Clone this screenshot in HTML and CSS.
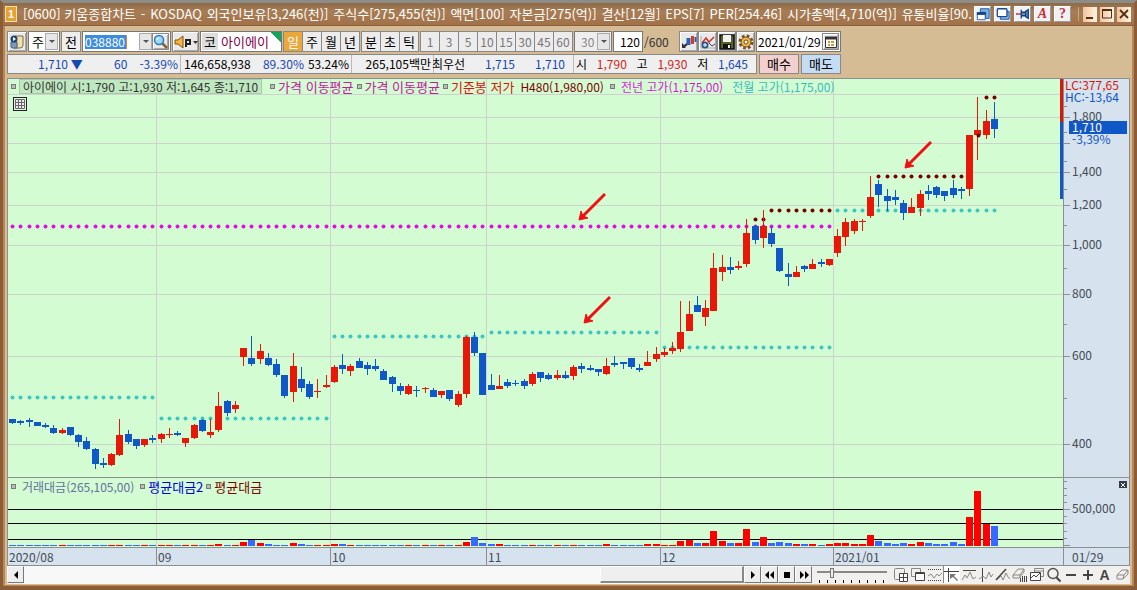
FILE: index.html
```html
<!DOCTYPE html>
<html lang="ko">
<head>
<meta charset="utf-8">
<title>키움종합차트</title>
<link rel="stylesheet" href="styles.css">
</head>
<body>
<div class="window">
  <header class="titlebar">
    <span class="badge">1</span>
    <h1 class="title"><span>[0600] 키움종합차트</span><span>-</span><span>KOSDAQ</span><span>외국인보유[3,246(천)]</span><span>주식수[275,455(천)]</span><span>액면[100]</span><span>자본금[275(억)]</span><span>결산[12월]</span><span>EPS[7]</span><span>PER[254.46]</span><span>시가총액[4,710(억)]</span><span>유통비율[90.</span></h1>
    <div class="tools">
      <button aria-label="화면 배치"><svg viewBox="0 0 16 16"><path d="M5 2h10v11h-4V6H5z" fill="#7db4e8" stroke="#174b94"/><path d="M1.500 6.500h9v8h-9z" fill="#fff" stroke="#2058a8"/><path d="M1 7.500h10" stroke="#103f85" stroke-width="3"/></svg></button>
      <button aria-label="화면 복사"><svg viewBox="0 0 16 16"><path d="M5 5h10v9H5z" fill="#8fb8e8" stroke="#174b94"/><rect x="1.500" y="2" width="11" height="9" rx="1" fill="#fff" stroke="#174b94" stroke-width="1.500"/></svg></button>
      <button aria-label="고정"><svg viewBox="0 0 16 16"><path d="M0 8h6" stroke="#d02020" stroke-width="1.500"/><path d="M6 3v10M6 6h5v4H6M11 5l3-2v10l-3-2z" fill="#5c94d0" stroke="#173f78" stroke-width="1.500"/></svg></button>
      <button class="glyph italic">A</button>
      <button class="glyph">?</button>
    </div>
    <i class="bar"></i>
    <div class="controls">
      <button aria-label="최소화"><svg viewBox="0 0 14 14"><path d="M3 11h7" stroke="#503010" stroke-width="2"/></svg></button>
      <button aria-label="최대화"><svg viewBox="0 0 14 14"><path d="M2.500 3v8h9V3z" fill="none" stroke="#503010"/><path d="M2 3h10" stroke="#503010" stroke-width="2"/></svg></button>
      <button aria-label="닫기"><svg viewBox="0 0 14 14"><path d="M3 3l8 8M11 3l-8 8" stroke="#503010" stroke-width="1.800"/></svg></button>
    </div>
  </header>

  <div class="toolbar">
    <button class="raised" aria-label="종목 이력"><svg viewBox="0 0 16 16"><path d="M6 2h8v9q0 3-3 3H5q3 0 3-3z" fill="#f4dfa8" stroke="#746b58"/><path d="M2 8h6v6H3q-1 0-1-2z" fill="#7b9cb8" stroke="#43617c"/><circle cx="5" cy="5" r="3.500" fill="#1c4774"/><path d="M4 3l3 2-3 2z" fill="#fff"/></svg></button>
    <span class="combo market"><select aria-label="시장"><option>주</option></select><i class="arrow"></i></span>
    <button class="flat">전</button>
    <span class="combo code"><input class="codeinput" aria-label="종목코드" value="038880"><i class="arrow"></i><button class="raised small" aria-label="검색"><svg viewBox="0 0 16 16"><path d="M9 9l5 5" stroke="#846040" stroke-width="2.500"/><circle cx="6" cy="6" r="4.500" fill="#9dd7ff" stroke="#3478b0" stroke-width="1.500"/><path d="M4 6q0-2 2-2" stroke="#fff" fill="none"/></svg></button></span>
    <button class="raised speaker" aria-label="소리"><svg viewBox="0 0 24 16"><path d="M1 6h3l5-4v12l-5-4H1z" fill="#f6b63c" stroke="#805010"/><path d="M12 13V6h4v4h-4" fill="none" stroke="#222" stroke-width="2"/><path d="M19 7h5l-2.500 3z" fill="#333"/></svg></button>
    <span class="name"><b>코</b><span>아이에이</span></span>
    <span class="tabs dark"><button class="on">일</button><button>주</button><button>월</button><button>년</button></span>
    <span class="tabs dark"><button>분</button><button>초</button><button>틱</button></span>
    <span class="tabs"><button>1</button><button>3</button><button>5</button><button>10</button><button>15</button><button>30</button><button>45</button><button>60</button></span>
    <span class="combo off"><select aria-label="간격"><option>30</option></select><i class="arrow"></i></span>
    <label class="count"><input value="120">/600</label>
    <span class="iconset">
      <button class="raised" aria-label="비교"><svg viewBox="0 0 16 16"><path d="M1 14V9l2 2 4-3 1 2-4 3 1 1z" fill="#333"/><path d="M7.500 4v7" stroke="#2464b8" stroke-width="4"/><path d="M11.500 2v8" stroke="#d83828" stroke-width="3"/><path d="M14.500 3v5" stroke="#2464b8" stroke-width="2"/></svg></button>
      <button class="raised" aria-label="지표"><svg viewBox="0 0 16 16"><path d="M1 2v12h14" stroke="#aaa" fill="none"/><path d="M2 9l4-5 3 4 5-5" fill="none" stroke="#d03030" stroke-width="1.500"/><path d="M9 9l3 3 3-2" stroke="#444" fill="none"/><circle cx="5" cy="11" r="3.500" fill="#285888"/><path d="M3 11h4M5 9v4" stroke="#fff"/></svg></button>
      <button class="raised" aria-label="저장"><svg viewBox="0 0 16 16"><path d="M1 1h14v14H1z" fill="#59612b" stroke="#111" stroke-width="1.500"/><path d="M4 1h8v7H4z" fill="#f2f2f2"/><path d="M4 10h8v5H4z" fill="#111"/><path d="M9 11h2v3H9z" fill="#eee"/></svg></button>
      <button class="raised" aria-label="설정"><svg viewBox="0 0 16 16"><circle cx="8" cy="8" r="6" fill="none" stroke="#765020" stroke-width="3" stroke-dasharray="2.600 2.100"/><circle cx="8" cy="8" r="5" fill="#f4b544" stroke="#765020"/><circle cx="8" cy="8" r="2" fill="#fff" stroke="#765020"/></svg></button>
    </span>
    <span class="combo date"><input aria-label="날짜" value="2021/01/29"><button class="raised small" aria-label="달력"><svg viewBox="0 0 16 16"><path d="M2.500 3.500h11v10h-11z" fill="#fff" stroke="#333"/><path d="M2 4h12" stroke="#333" stroke-width="3"/><path d="M5 8h2M8 8h3M5 11h2M8 11h3" stroke="#cf9838" stroke-width="2"/></svg></button></span>
  </div>

  <div class="quotebar">
    <div class="quote">
      <div class="cell c1"><span class="down">1,710 ▼</span><span class="down">60</span><span class="down">-3.39%</span></div>
      <div class="cell c2"><span>146,658,938</span><span class="down">89.30%</span><span>53.24%</span></div>
      <div class="cell c3"><span>265,105백만</span></div>
      <div class="cell c4"><span>최우선</span><span class="down">1,715</span><span class="down">1,710</span></div>
      <div class="cell c5"><span>시</span><span class="up">1,790</span><span>고</span><span class="up">1,930</span><span>저</span><span class="down">1,645</span></div>
    </div>
    <button class="trade buy">매수</button>
    <button class="trade sell">매도</button>
  </div>

  <main class="chart">
    <section class="plot">
      <svg id="price" viewBox="8 79 1055 398" preserveAspectRatio="none"></svg>
      <div class="legend">
        <i></i><span class="ohlc">아이에이 시:1,790 고:1,930 저:1,645 종:1,710</span>
        <i></i><span class="plum large">가격 이동평균</span>
        <i></i><span class="plum large">가격 이동평균</span>
        <i></i><span class="red large">기준봉 저가</span><span class="maroon wide">H480(1,980,00)</span>
        <i></i><span class="magenta wide">전년 고가(1,175,00)</span><span class="cyan wide">전월 고가(1,175,00)</span>
      </div>
      <button class="grid" aria-label="표"><svg viewBox="0 0 12 12"><path d="M1.500 1.500h9v9h-9zM1 4.500h10M1 7.500h10M4.500 2v9M7.500 2v9" fill="none" stroke="#666"/></svg></button>
    </section>
    <aside class="axis">
      <svg id="priceAxis" viewBox="1064 79 65 398" preserveAspectRatio="none"></svg>
    </aside>
    <section class="plot volume">
      <svg id="volume" viewBox="8 478 1055 69" preserveAspectRatio="none"></svg>
      <div class="legend low">
        <i></i><span class="slate wide">거래대금(265,105,00)</span>
        <i></i><span class="blue large">평균대금2</span>
        <i></i><span class="maroon large">평균대금</span>
      </div>
    </section>
    <aside class="axis volume">
      <svg id="volumeAxis" viewBox="1064 478 65 69" preserveAspectRatio="none"></svg>
      <button class="close" aria-label="닫기"><svg viewBox="0 0 8 8"><path d="M2 2l4 4M6 2l-4 4" stroke="#fff"/></svg></button>
    </aside>
    <div class="dates"><span>2020/08</span><span>09</span><span>10</span><span>11</span><span>12</span><span>2021/01</span></div>
    <div class="dates last">01/29</div>
  </main>

  <footer class="strip">
    <button class="key" aria-label="왼쪽"><svg viewBox="0 0 16 16"><path d="M10 4v8L6 8z"/></svg></button>
    <div class="track"><div class="thumb"></div></div>
    <button class="key" aria-label="오른쪽"><svg viewBox="0 0 16 16"><path d="M6 4v8l4-4z"/></svg></button>
    <button class="key" aria-label="뒤로"><svg viewBox="0 0 16 16"><path d="M7 4v8L3 8zM12 4v8L8 8z"/></svg></button>
    <button class="key" aria-label="정지"><svg viewBox="0 0 16 16"><path d="M5 5h6v6H5z"/></svg></button>
    <button class="key" aria-label="앞으로"><svg viewBox="0 0 16 16"><path d="M4 4v8l4-4zM9 4v8l4-4z"/></svg></button>
    <input class="speed" type="range" min="0" max="100" value="20" aria-label="속도">
    <div class="draw">
      <button aria-label="창 추가"><svg viewBox="0 0 16 16"><rect x="1.500" y="1.500" width="10" height="11" rx="1"/><path d="M6.500 6.500h8v8h-8zM6 10.500h9M10.500 6v9" fill="#fff" stroke="#444"/></svg></button>
      <button aria-label="창 겹치기"><svg viewBox="0 0 16 16"><path d="M1.500 1.500h9v8h-9z"/><path d="M5.500 5.500h9v8h-9zM5 6.500h10" fill="#fff" stroke="#444"/></svg></button>
      <button aria-label="자동선"><svg viewBox="0 0 16 16"><path d="M1 2.500h14M1 13.500h14" stroke="#444" stroke-dasharray="1 1"/><path d="M1 9l3-2 3 4 3-4 2 2 3-3"/></svg></button>
      <button class="on" aria-label="십자선"><svg viewBox="0 0 16 16"><path d="M4.500 1v14M0 4.500h15" stroke="#444"/><path d="M6 7h6l-2 2 4 4-1 1-4-4-3 2z" fill="#777" stroke="none"/></svg></button>
      <button aria-label="수평선"><svg viewBox="0 0 16 16"><path d="M2 3.500h13" stroke="#444"/><path d="M1 13l3-5 2 3 3-6 3 7 3-2"/></svg></button>
      <button aria-label="수직선"><svg viewBox="0 0 16 16"><path d="M4.500 1v14" stroke="#444"/><path d="M1 12l4-3 3 3 3-7 2 5 2-3"/></svg></button>
      <button aria-label="추세선"><svg viewBox="0 0 16 16"><path d="M1 13L11 2" stroke="#444" stroke-width="1.500"/><path d="M2 13l4-4 2 4 3-7 2 4 2 2"/></svg></button>
      <button aria-label="모두 지우기"><svg viewBox="0 0 16 16"><path d="M1 8l5-6h6L8 8zM1 8v3h6l5-6V2M8 8v3"/><path d="M8.500 11v4M10.500 9v6M12.500 9v6M14.500 9v6" stroke="#444"/></svg></button>
      <button aria-label="차트 복사"><svg viewBox="0 0 16 16"><path d="M5.500 1.500h9v8h-9zM6 4h8"/><path d="M1.500 5.500h10v8h-10zM2 11l3-3 2 2 4-4" fill="#fff" stroke="#444"/></svg></button>
      <button aria-label="돋보기"><svg viewBox="0 0 16 16"><circle cx="7" cy="6.500" r="5" stroke="#555" stroke-width="1.500"/><path d="M10.500 10.500l4 4" stroke="#444" stroke-width="2"/></svg></button>
      <button aria-label="축소"><svg viewBox="0 0 16 16"><path d="M3 8h10" stroke="#444" stroke-width="2"/></svg></button>
      <button aria-label="확대"><svg viewBox="0 0 16 16"><path d="M3 8h10M8 3v10" stroke="#444" stroke-width="2"/></svg></button>
      <button class="letter">A</button>
      <button aria-label="지우개"><svg viewBox="0 0 16 16"><path d="M3 8l5-5h6l-4 5zM3 8v4h6l5-5V3M10 8l-1 4"/></svg></button>
    </div>
  </footer>
</div>
<script src="chart.js"></script>
</body>
</html>
```
FILE: styles.css
```css
:root {
  --text: "Noto Sans CJK KR", sans-serif;
  --line: #8a8f92;
}
* { box-sizing: border-box; }
body { margin: 0; font: 12px/18px var(--text); color: #000; }
button, input, select { font: inherit; color: inherit; margin: 0; padding: 0; border: 0; border-radius: 0; background: none; min-width: 0; }
button { display: grid; place-items: center; flex: none; white-space: nowrap; }
button svg { width: 16px; height: 16px; display: block; }
select { appearance: none; }
.window { height: 100vh; display: flex; flex-direction: column; background: #d6bc95; border: solid #8a5c38; border-width: 3px 3px 4px; border-top-color: #8c8c88; box-shadow: inset 0 -1px #b98655, inset 2px 0 #b98655, inset -2px 0 #b98655; padding: 0 4px 2px; }

.titlebar { display: flex; align-items: center; height: 23px; flex: none; margin: 0 -4px; padding: 0 3px 0 2px; background: linear-gradient(#8d6a47, #a87d54 40%, #a2714a); border-bottom: 1px solid #8a6038; color: #fff; }
.badge { width: 12px; height: 16px; flex: none; background: #e8a030; border: 1px solid #fbe2ab; font: bold 11px/14px "Liberation Sans", sans-serif; text-align: center; }
.title { flex: 1; margin: 0 0 0 6px; display: flex; justify-content: space-between; font-size: 13px; line-height: 22px; font-weight: 400; white-space: nowrap; overflow: hidden; }
.tools, .controls { display: flex; gap: 3px; margin-left: 2px; }
.tools button { width: 17px; height: 16px; background: #eef2f6; border: 1px solid #fff; border-right-color: #999; border-bottom-color: #999; }
.tools svg { height: 14px; }
.tools .glyph { color: #d02a2a; font: bold 14px/14px "Liberation Serif", serif; }
.tools .italic { font-style: italic; }
.bar { width: 1px; height: 14px; background: #c6a682; margin: 0 2px 0 7px; }
.controls button { width: 14px; height: 15px; background: linear-gradient(90deg, #f1c49c, #fff3e5); }
.controls svg { width: 14px; height: 14px; }

.toolbar { display: flex; gap: 1px; height: 21px; flex: none; margin-top: 5px; }
.raised { width: 20px; height: 21px; background: #e9e9e9; border: 1px solid #888; box-shadow: inset 1px 1px #fff, inset -1px -1px #aaa; }
.small { width: 17px; height: 17px; }
.flat { width: 20px; background: #eee; border: 1px solid #888; font-size: 13px; }
.combo { display: flex; align-items: center; width: 38px; border: 1px solid #777; background: #fff; padding: 1px; }
.combo select, .combo input { flex: 1; width: 0; height: 18px; padding-left: 2px; }
.market { width: 32px; font-size: 13px; }
.arrow { width: 13px; height: 17px; flex: none; background: #e6e6e6; border: 1px solid #aaa; display: grid; place-items: center; }
.arrow::after { content: ""; border: 3px solid transparent; border-top: 3px solid #555; border-bottom: 0; }
.code { width: 89px; }
.combo .codeinput { flex: none; width: 42px; margin-right: auto; padding: 0; background: #3d8ce0; color: #fff; height: 14px; margin-left: 1px; border-right: 1px solid #d7853c; }
.speaker { width: 27px; }
.speaker svg { width: 24px; }
.name { display: flex; align-items: center; width: 82px; padding: 1px; background: linear-gradient(45deg, transparent 50%, #16a35c 50%) right top / 10px 10px no-repeat, #fff; border: 1px solid #777; font-size: 13px; }
.name b { font-weight: 400; width: 16px; line-height: 17px; text-align: center; background: #ddd; margin-right: 3px; }
.name span { color: #800050; }
.tabs { display: flex; border: 1px solid #888; }
.tabs button { width: 19px; height: 19px; background: #ececec; color: #777; border-left: 1px solid #888; }
.tabs button:first-child { width: 18px; border-left: 0; }
.tabs.dark button { color: #000; font-size: 13px; }
.tabs.dark .on { background: #eaa73a; color: #fff; }
.off { background: #eee; color: #888; }
.combo.off select { padding-left: 5px; }
.count { display: flex; align-items: center; color: #333; width: 65px; white-space: nowrap; }
.count input { width: 30px; height: 21px; background: #fff; border: 1px solid #777; color: #000; text-align: right; padding-right: 2px; margin-right: 1px; }
.iconset { display: flex; }
.iconset button { width: 19px; }
.date { width: 85px; }
.combo.date input { padding-left: 0; }

.quotebar { display: flex; gap: 2px; height: 20px; flex: none; margin: 2px 0 4px; }
.quote { display: flex; width: 750px; background: #efefef; border: 1px solid #888; }
.cell { display: flex; justify-content: flex-end; align-items: center; padding: 0 2px; border-left: 1px solid #bbb; white-space: nowrap; }
.cell:first-child { border-left: 0; }
.cell span:first-child { margin-right: auto; }
.c1 { width: 172px; padding-left: 30px; gap: 12px; }
.c2 { width: 171px; padding-left: 3px; gap: 4px; }
.c3 { width: 82px; }
.c3 span:first-child { margin-right: 0; }
.c4 { width: 140px; padding-right: 8px; gap: 20px; }
.c5 { width: 183px; padding-right: 8px; justify-content: space-between; }
.c5 span:first-child { margin-right: 0; }
.down { color: #1648b4; }
.up { color: #d02418; }
.trade { width: 40px; border: 1px solid #888; font-size: 13px; }
.buy { background: #f4cfcf; }
.sell { background: #c4dcf4; }

.chart { flex: 1; min-height: 0; display: grid; grid-template: minmax(0, 398fr) minmax(0, 70fr) 18px / minmax(0, 1fr) 66px; border: 1px solid var(--line); }
.plot, .axis { position: relative; overflow: hidden; }
.plot { background: #d3fcd3; }
.axis { background: #d6e2ed; border-left: 1px solid var(--line); }
.plot > svg, .axis > svg { display: block; width: 100%; height: 100%; }
.axis text { font: 12px var(--text); fill: #444c55; }
.volume { border-top: 1px solid var(--line); }
.legend { position: absolute; left: 3px; top: 0; display: flex; align-items: center; gap: 3px; height: 15px; white-space: nowrap; }
.legend i { width: 5px; height: 5px; flex: none; border: 1px solid #7a7a7a; background: #bbb; }
.ohlc { background: #c0e8c0; border: 1px solid #aac8aa; padding: 0 3px; line-height: 13px; margin-right: 5px; color: #333; }
.large { font-size: 13px; }
.wide { margin: 0 3px; }
.low { top: 1px; }
.plum { color: #c020a0; }
.red { color: #e01010; }
.maroon { color: #800000; }
.magenta { color: #d818d8; }
.cyan { color: #38bcbc; }
.slate { color: #6470a0; }
.blue { color: #0000d8; }
.grid { position: absolute; left: 5px; top: 18px; width: 14px; height: 14px; background: #eee; border: 1px solid #222; }
.grid svg { width: 12px; height: 12px; }
.close { position: absolute; right: 2px; top: 3px; width: 8px; height: 7px; background: #333c48; }
.close svg { width: 8px; height: 8px; }
.dates { display: grid; grid-template-columns: 148fr 174fr 156fr 174fr 173fr 230fr; line-height: 17px; background: #d6e2ed; color: #444c55; border-top: 1px solid var(--line); }
.dates span { padding-left: 1px; border-left: 1px solid var(--line); }
.dates span:first-child { border: 0; }
.dates.last { display: block; padding-left: 8px; border-left: 1px solid var(--line); }

.strip { display: flex; height: 18px; flex: none; background: #f2f0ee; }
.key { width: 17px; height: 17px; background: #eee; border: 1px solid #fff; border-right-color: #777; border-bottom-color: #777; }
.track { flex: 1; display: flex; justify-content: flex-end; background: #f8f8f8; }
.thumb { width: 20%; height: 17px; background: #efefef; border: 1px solid #fff; border-right: 2px solid #888; border-bottom: 2px solid #888; }
.speed { appearance: none; width: 70px; height: 18px; margin: 0 5px; background: linear-gradient(#888, #888) 0 5px / 100% 2px no-repeat, repeating-linear-gradient(90deg, transparent 0 2px, #000 2px 3px, transparent 3px 8px) 0 14px / 100% 3px no-repeat; }
.speed::-webkit-slider-thumb { appearance: none; width: 4px; height: 10px; margin-top: -5px; background: #eee; border: 1px solid #777; }
.draw { display: flex; }
.draw button { width: 17px; height: 17px; }
.draw svg { width: 16px; height: 16px; fill: none; stroke: #888; }
.draw .on { background: #fff; border-left: 1px solid #888; }
.draw .letter { font: bold 14px/16px "Liberation Sans", sans-serif; color: #444; }
```
FILE: chart.js
```js
// One row per session: direction, high, body top, body bottom, low.
const sessions = `b419 419 423 424,b420 421 423 425,b418 420 422 427,b422 422 426 426,b423 425 427 428,b425 428 433 434,r428 430 433 434,b427 427 435 436,b434 435 442 447,b437 441 449 450,b448 449 464 469,b458 463 465 468,r453 454 465 466,r419 435 455 456,b430 434 442 444,b439 439 446 449,r439 439 445 447,b435 438 440 443,r433 434 439 443,r428 434 435 438,b431 433 435 436,r438 438 443 447,r424 425 438 439,b419 420 431 432,r419 432 435 438,r392 406 430 432,b400 401 413 416,r401 405 409 413,r348 348 357 366,b336 358 364 366,r344 351 359 364,b353 358 365 366,b359 364 375 377,b375 375 396 398,r353 366 392 402,b367 379 388 392,b381 384 397 399,r379 391 392 398,r375 385 387 388,r365 367 382 383,b354 365 369 374,r364 366 371 376,b358 361 368 368,b362 365 369 375,b359 366 369 371,b369 371 380 380,b376 377 384 392,b383 386 391 395,r384 386 394 395,b386 390 391 397,r387 388 389 393,b388 390 397 397,r391 391 395 398,b390 390 399 401,r391 394 405 407,r336 337 394 398,b332 337 353 356,b353 353 395 395,b374 385 390 390,r375 386 389 389,b379 382 386 388,b380 383 384 386,b379 381 386 389,r372 374 384 386,b372 372 378 382,b373 375 379 380,r370 375 378 380,b371 375 378 379,r365 367 376 380,b363 366 369 373,b365 368 370 371,b369 369 372 376,r358 366 374 375,b356 363 365 367,b362 362 364 369,b358 358 367 369,b364 368 370 372,r351 362 366 366,r347 354 359 362,r348 352 355 357,r342 348 351 354,r301 332 349 352,r301 314 331 331,b296 305 312 312,r300 308 317 326,r253 268 311 311,r255 267 272 281,b257 267 270 274,r261 266 268 270,r219 233 264 267,b225 226 240 244,r210 226 238 248,b227 233 244 247,b248 248 271 272,b263 274 277 286,r266 272 277 277,b265 266 269 272,r259 264 269 269,b259 262 264 267,r259 259 265 266,r229 236 253 257,r218 222 237 246,r219 221 231 234,r219 221 222 231,r176 197 216 218,b180 184 195 207,b189 196 201 211,b190 197 200 205,b200 203 213 220,r198 207 213 213,r190 194 208 216,b185 191 194 200,b186 187 195 198,b191 191 196 201,b180 188 195 198,b187 189 191 199,r135 135 189 196,r97 130 135 160,r110 121 135 139,b102 119 129 138`
  .split(',').map(s => ({ up: s[0] === 'r', v: s.slice(1).split(' ').map(Number) }));

// Dotted levels: colour, y, first session, last session.
const levels = [
  ['#3cc8c0', 397, 0, 17], ['#3cc8c0', 418, 18, 38], ['#3cc8c0', 336, 39, 57],
  ['#3cc8c0', 332, 58, 78], ['#3cc8c0', 347, 79, 99], ['#3cc8c0', 210, 100, 119],
  ['#e010e0', 226, 0, 99], ['#780000', 219, 90, 91], ['#780000', 210, 92, 99],
  ['#780000', 176, 105, 115], ['#780000', 97, 118, 119]
];

// Turnover bars taller than the one-pixel minimum.
const turnover = { 25: 2, 28: 4, 29: 6, 30: 3, 31: 2, 34: 3, 35: 2, 39: 2, 40: 2, 55: 4, 56: 9, 57: 3, 58: 2, 59: 2, 72: 2, 77: 2, 78: 2, 81: 5, 82: 6, 83: 3, 84: 3, 85: 15, 86: 5, 87: 3, 88: 3, 89: 17, 90: 4, 91: 9, 92: 3, 93: 4, 94: 3, 95: 2, 96: 2, 97: 2, 99: 2, 100: 3, 101: 3, 102: 2, 103: 2, 104: 11, 105: 5, 106: 3, 107: 2, 108: 3, 109: 2, 110: 4, 111: 3, 112: 2, 113: 2, 114: 4, 115: 2, 116: 29, 117: 55, 118: 22, 119: 20 };

const center = i => Math.floor(12.5 + i * 8.25);
const rect = (x, y, w, h, fill) => `<rect x="${x}" y="${y}" width="${w}" height="${h}" fill="${fill}"/>`;
const months = [156, 330, 486, 660, 833];

let price = [94, 117, 143, 172, 205, 245, 294, 356, 444].map(y => rect(8, y, 1055, 1, '#cdd2cd')).join('');
price += months.map(x => rect(x, 79, 1, 398, '#cdd2cd')).join('');
for (const [color, y, from, to] of levels) {
  for (let i = from; i <= to; i++) price += `<circle cx="${center(i) + 0.5}" cy="${y + 0.5}" r="2" fill="${color}"/>`;
}
sessions.forEach(({ up, v: [high, top, bottom, low] }, i) => {
  const color = up ? '#e81808' : '#1058c8';
  price += rect(center(i), high, 1, low - high, color) + rect(center(i) - 3, top, 7, Math.max(1, bottom - top), color);
});
price += '<circle cx="978.5" cy="135.5" r="2" fill="#780000"/>';
for (const [x, y] of [[579, 220], [584, 323], [905, 168]]) {
  price += `<path d="M${x + 26} ${y - 26}L${x + 3} ${y - 3}" stroke="#f01010" stroke-width="3"/><path d="M${x} ${y}l2-9 2 5 5 2z" fill="#f01010" stroke="#f01010"/>`;
}
price += rect(1060, 79, 3, 43, '#d81808') + rect(1060, 122, 3, 77, '#1058c8');
document.getElementById('price').innerHTML = price;

let volume = months.map(x => rect(x, 478, 1, 69, '#cdd2cd')).join('');
volume += [509, 523, 539].map(y => rect(8, y, 1055, 1, '#000')).join('');
sessions.forEach(({ up }, i) => {
  const h = turnover[i] || 1;
  volume += rect(center(i) - 3, 546 - h, 7, h, up ? '#ff0000' : '#3868ff');
});
document.getElementById('volume').innerHTML = volume;

const label = (x, y, s, fill) => `<text x="${x}" y="${y}"${fill ? ` style="fill:${fill}"` : ''}>${s}</text>`;
let axis = [106, 132, 161, 189, 225, 268, 324, 398].map(y => rect(1064, y, 3, 1, '#8a8f92')).join('');
axis += rect(1064, 143, 6, 1, '#8a8f92');
axis += [[117, '1,800'], [172, '1,400'], [205, '1,200'], [245, '1,000'], [294, '800'], [356, '600'], [444, '400']]
  .map(([y, s]) => rect(1064, y, 6, 1, '#8a8f92') + label(1072, y + 4, s)).join('');
axis += rect(1069, 121, 58, 13, '#1058c8') + label(1072, 132, '1,710', '#fff');
axis += label(1072, 144, '-3,39%', '#1058c8') + label(1065, 90, 'LC:377,65', '#d81808') + label(1065, 102, 'HC:-13,64', '#1058c8');
document.getElementById('priceAxis').innerHTML = axis;

let scale = [481, 488, 495, 502, 516, 523, 531, 538].map(y => rect(1064, y, 3, 1, '#8a8f92')).join('');
scale += rect(1064, 509, 6, 1, '#8a8f92') + rect(1064, 545, 6, 1, '#8a8f92') + label(1072, 513, '500,000');
document.getElementById('volumeAxis').innerHTML = scale;
```
